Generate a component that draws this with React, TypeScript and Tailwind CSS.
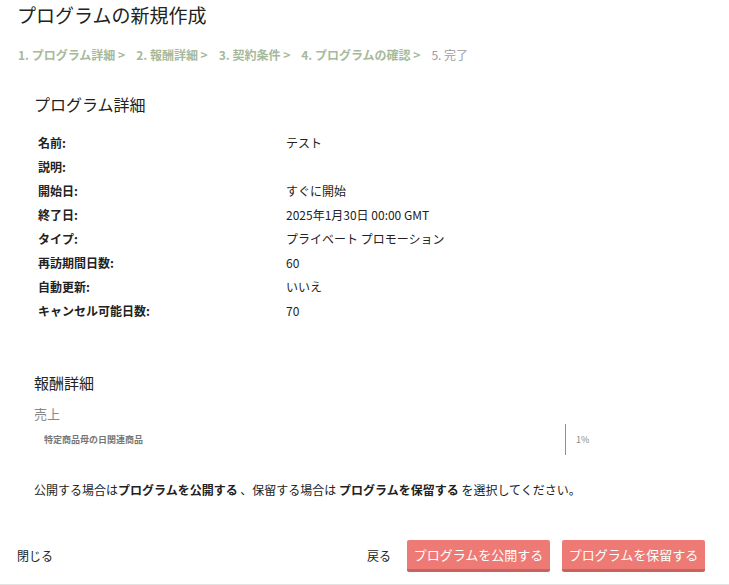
import React from "react";

const STEPS = [
  "1. プログラム詳細",
  "2. 報酬詳細",
  "3. 契約条件",
  "4. プログラムの確認",
];

const DETAILS: [string, string][] = [
  ["名前:", "テスト"],
  ["説明:", ""],
  ["開始日:", "すぐに開始"],
  ["終了日:", "2025年1月30日 00:00 GMT"],
  ["タイプ:", "プライベート プロモーション"],
  ["再訪期間日数:", "60"],
  ["自動更新:", "いいえ"],
  ["キャンセル可能日数:", "70"],
];

const font = {
  fontFamily: '"Noto Sans CJK JP", "Noto Sans", sans-serif',
};

export default function App() {
  return (
    <div
      className="w-[729px] h-[585px] bg-white text-[#222] flex flex-col border-b border-[#e2e2e2]"
      style={font}
    >
      <h1 className="px-[17px] pt-[2px] text-[19px] leading-[26px] text-[#222]">
        プログラムの新規作成
      </h1>

      <div className="flex items-center px-[18px] mt-[19px] text-[12px] leading-[16px] font-bold">
        {STEPS.map((s) => (
          <span key={s} className="text-[#a6b99b] mr-[11px]">
            {s} &gt;
          </span>
        ))}
        <span className="text-[#9c9c9c] font-normal">5. 完了</span>
      </div>

      <section className="px-[34px] mt-[30px]">
        <h2 className="text-[16px] leading-[22px]">プログラム詳細</h2>
        <div className="mt-[16px] pl-[4px] flex flex-col">
          {DETAILS.map(([label, value]) => (
            <div key={label} className="flex h-[24px] items-center text-[12px]">
              <span className="w-[248px] font-bold">{label}</span>
              <span>{value}</span>
            </div>
          ))}
        </div>
      </section>

      <section className="px-[34px] mt-[50px]">
        <h2 className="text-[15px] leading-[20px]">報酬詳細</h2>
        <div className="mt-[13px] text-[13px] leading-[16px] text-[#888]">売上</div>
        <div className="flex items-stretch h-[31px] mt-[2px]">
          <div className="w-[531px] flex items-center pl-[10px] text-[9px] font-bold text-[#777]">
            特定商品母の日関連商品
          </div>
          <div className="w-px bg-[#e06b6b]" />
          <div className="flex items-center pl-[10px] text-[9px] text-[#888]">1%</div>
        </div>
        <p className="mt-[27px] text-[12px] leading-[16px] text-[#222]">
          公開する場合は<b>プログラムを公開する</b> 、保留する場合は{" "}
          <b>プログラムを保留する</b> を選択してください。
        </p>
      </section>

      <footer className="mt-auto mb-[12px] flex items-center px-[17px]">
        <button className="text-[12px]">閉じる</button>
        <div className="ml-auto flex items-center gap-[12px] pr-[7px]">
          <button className="text-[12px] mr-[4px]">戻る</button>
          <button className="w-[143px] h-[32px] rounded-[2px] bg-[#ee7a75] border-b-[3px] border-[#c7625e] text-white text-[13px]">
            プログラムを公開する
          </button>
          <button className="w-[143px] h-[32px] rounded-[2px] bg-[#ee7a75] border-b-[3px] border-[#c7625e] text-white text-[13px]">
            プログラムを保留する
          </button>
        </div>
      </footer>
    </div>
  );
}
